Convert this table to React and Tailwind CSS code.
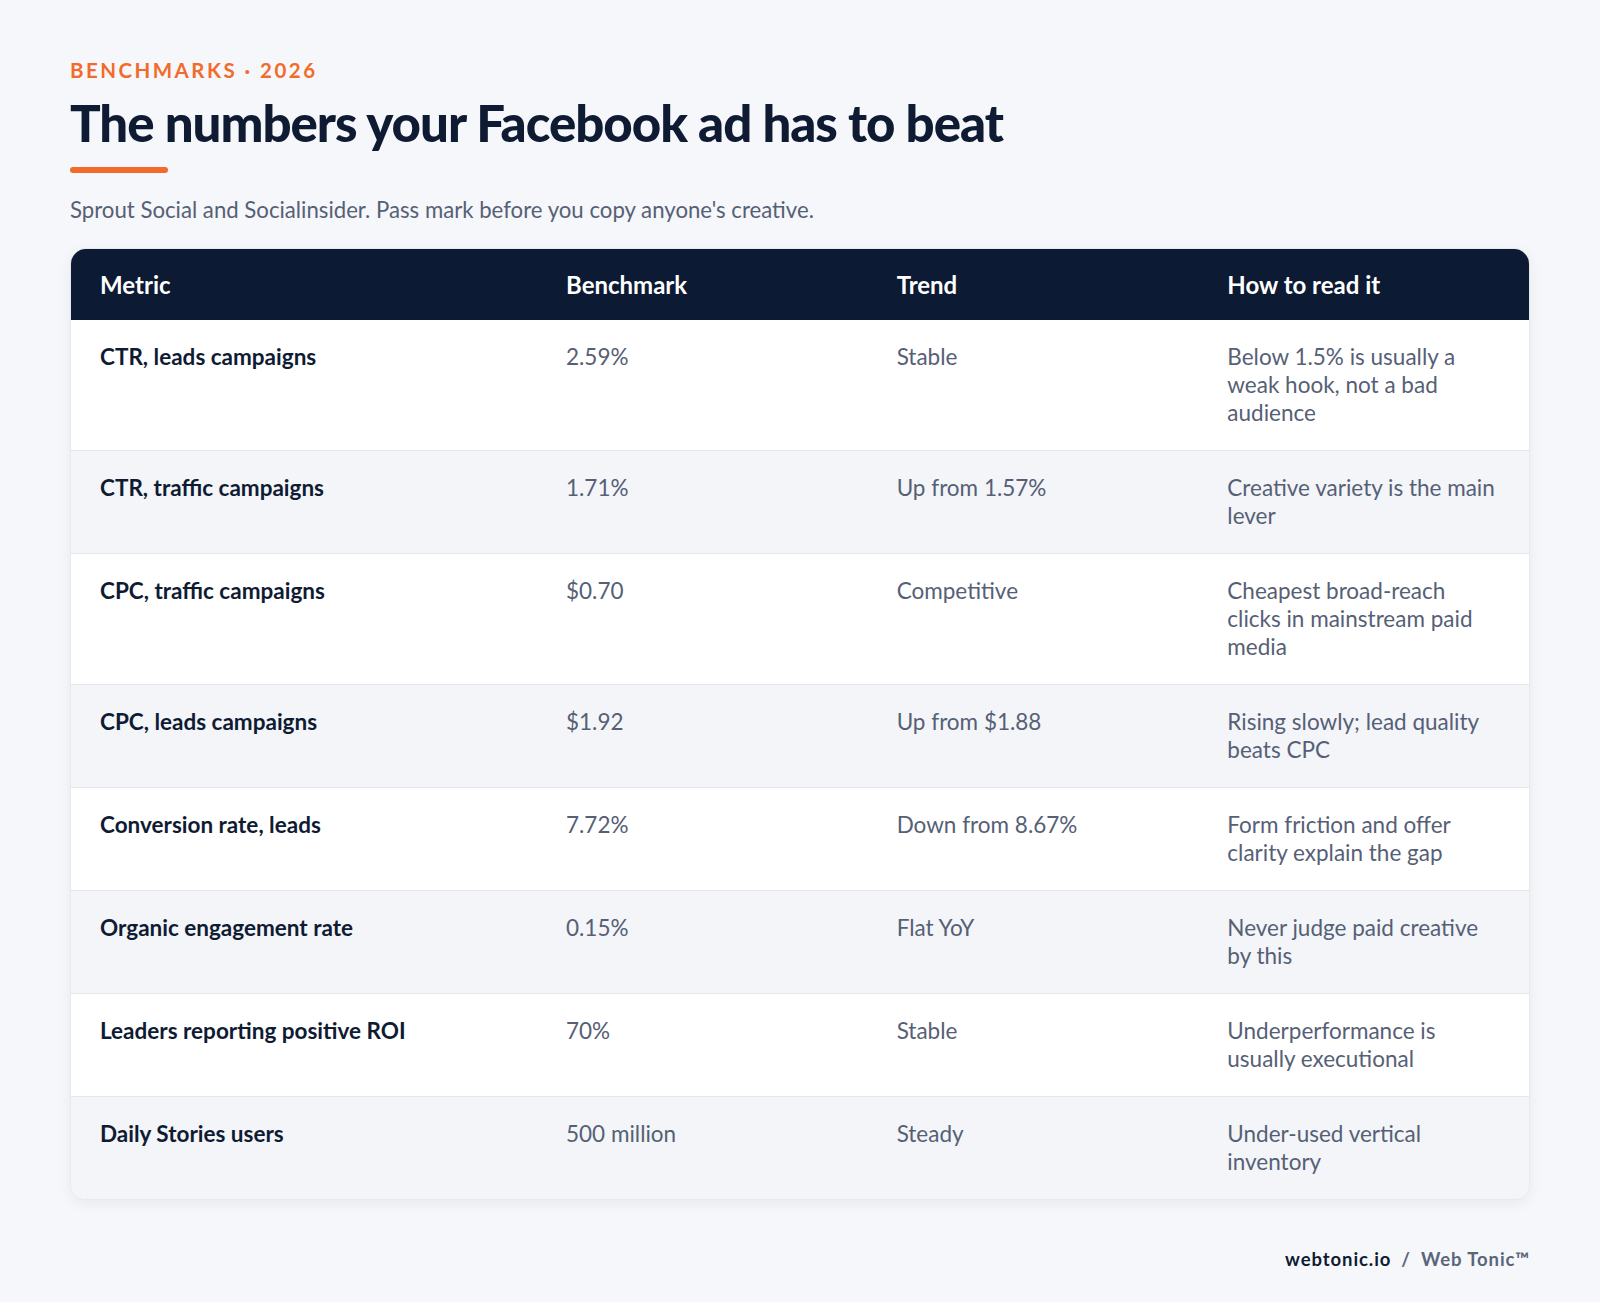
const rows = [
  ['CTR, leads campaigns', '2.59%', 'Stable', 'Below 1.5% is usually a weak hook, not a bad audience'],
  ['CTR, traffic campaigns', '1.71%', 'Up from 1.57%', 'Creative variety is the main lever'],
  ['CPC, traffic campaigns', '$0.70', 'Competitive', 'Cheapest broad-reach clicks in mainstream paid media'],
  ['CPC, leads campaigns', '$1.92', 'Up from $1.88', 'Rising slowly; lead quality beats CPC'],
  ['Conversion rate, leads', '7.72%', 'Down from 8.67%', 'Form friction and offer clarity explain the gap'],
  ['Organic engagement rate', '0.15%', 'Flat YoY', 'Never judge paid creative by this'],
  ['Leaders reporting positive ROI', '70%', 'Stable', 'Underperformance is usually executional'],
  ['Daily Stories users', '500 million', 'Steady', 'Under-used vertical inventory'],
];

export default function App() {
  return (
    <div className="min-h-[1302px] bg-[#f5f7fa] px-[70px] pt-[60px] pb-10 font-['Lato','Liberation_Sans',sans-serif]">
      <div className="text-[20.5px] font-bold tracking-[0.12em] text-[#f26b2a] leading-none">
        BENCHMARKS · 2026
      </div>
      <h1 className="mt-[14px] text-[51px] font-black leading-[1.1] tracking-[-0.02em] text-[#0f1b33]">
        The numbers your Facebook ad has to beat
      </h1>
      <div className="mt-[16px] h-[6px] w-[98px] rounded-full bg-[#f26b2a]" />
      <p className="mt-[21px] text-[22.2px] leading-[1.4] text-[#566075]">
        Sprout Social and Socialinsider. Pass mark before you copy anyone's creative.
      </p>

      <div className="mt-[23px] overflow-hidden rounded-[16px] border border-[#e6e9ef] bg-white shadow-[0_4px_14px_rgba(15,27,51,0.06)]">
        <div className="grid grid-cols-[466px_1fr_1fr_1fr] bg-[#0c1a33] text-[24px] font-bold text-white">
          {['Metric', 'Benchmark', 'Trend', 'How to read it'].map(h => (
            <div key={h} className="px-[29px] py-[19px] leading-[1.4]">
              {h}
            </div>
          ))}
        </div>
        {rows.map((r, i) => (
          <div
            key={r[0]}
            className={
              'grid grid-cols-[466px_1fr_1fr_1fr] text-[22.5px] leading-[28px] ' +
              (i > 0 ? 'border-t border-[#e4e7ed] ' : '') +
              (i % 2 === 1 ? 'bg-[#f3f5f9]' : 'bg-white')
            }
          >
            <div className="px-[29px] py-[23px] font-bold text-[#0f1b33]">{r[0]}</div>
            <div className="px-[29px] py-[23px] text-[#566075]">{r[1]}</div>
            <div className="px-[29px] py-[23px] text-[#566075]">{r[2]}</div>
            <div className="px-[29px] py-[23px] text-[#566075]">{r[3]}</div>
          </div>
        ))}
      </div>

      <div className="mt-[46px] flex justify-end text-[18.5px] font-bold tracking-[0.05em]">
        <span className="text-[#0f1b33]">webtonic.io</span>
        <span className="mx-[10px] text-[#5b6579]">/</span>
        <span className="text-[#5b6579]">Web Tonic™</span>
      </div>
    </div>
  );
}
